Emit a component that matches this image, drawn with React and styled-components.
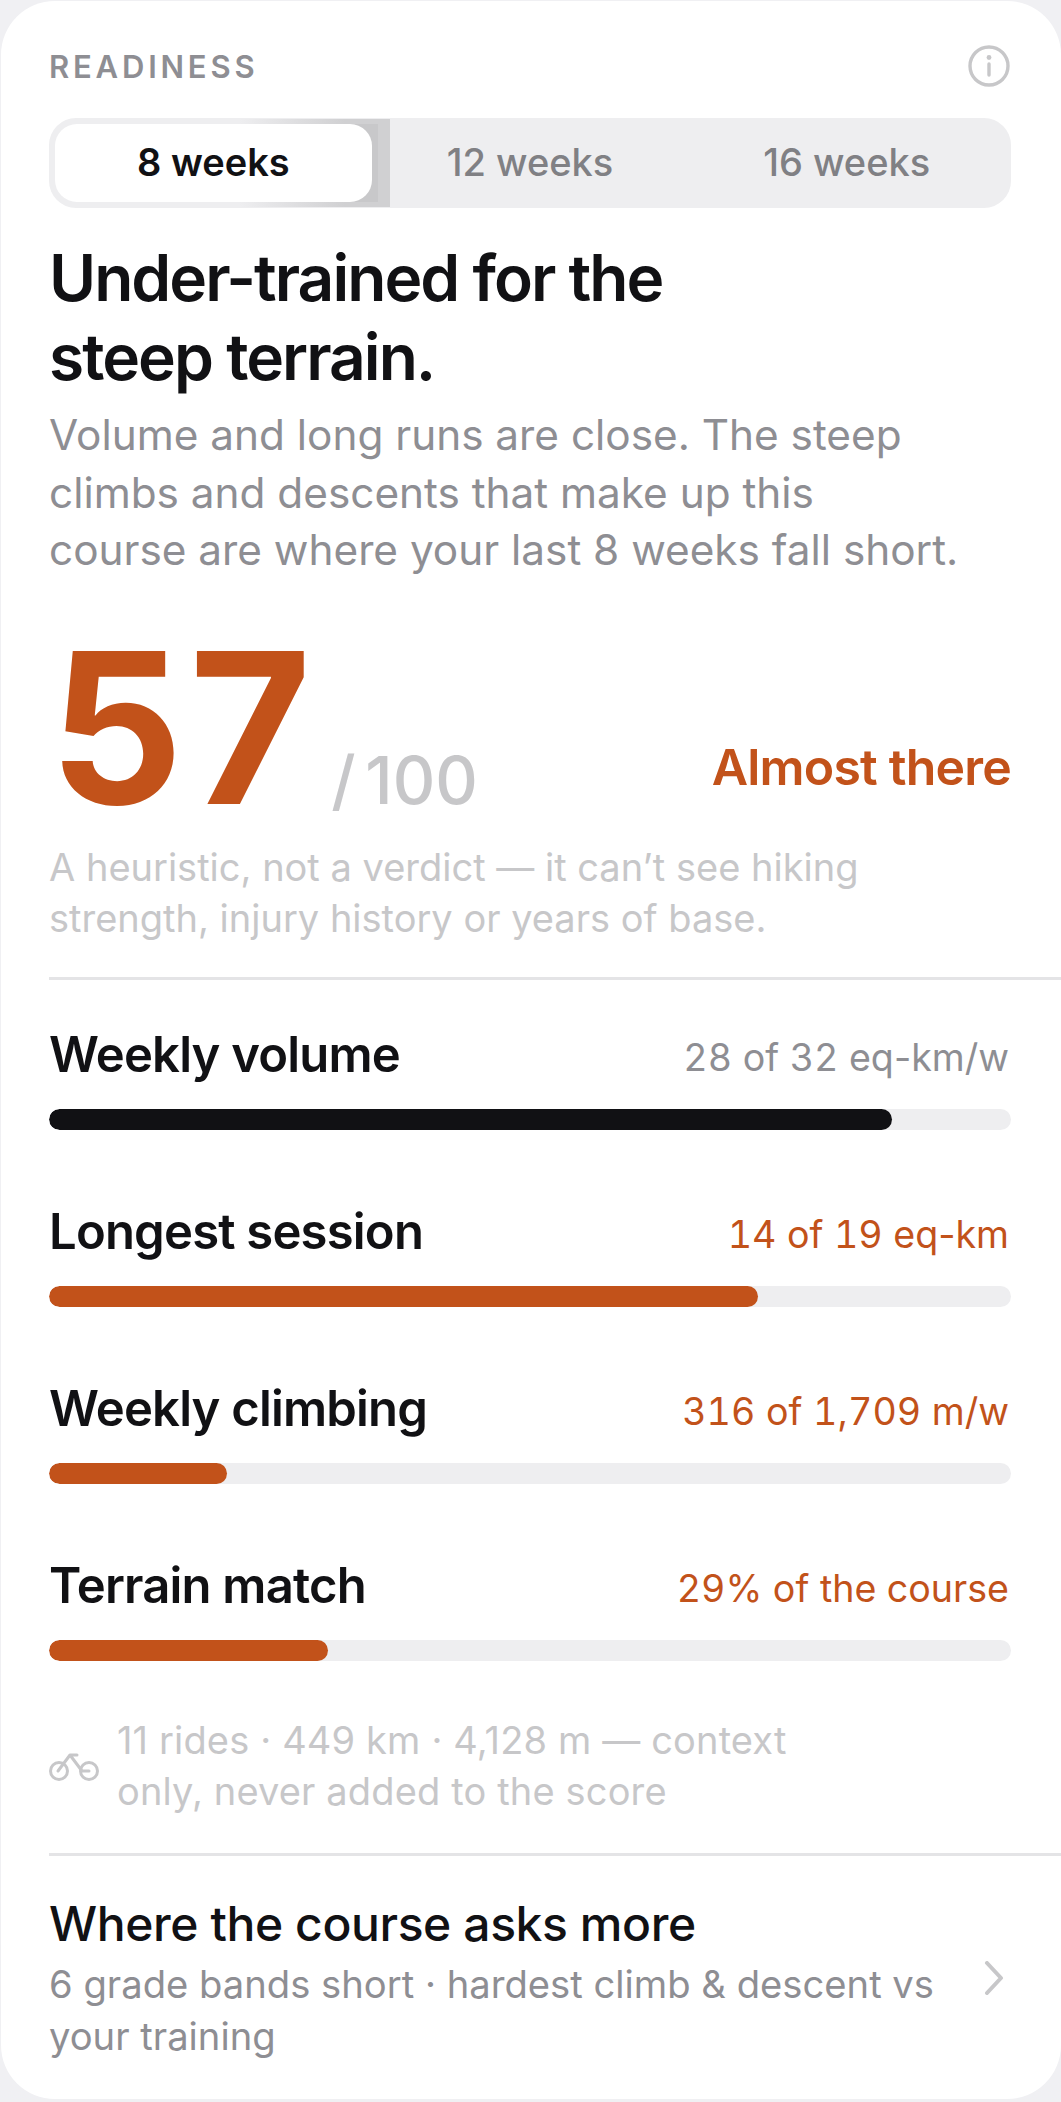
import React from "react";
import styled, { createGlobalStyle } from "styled-components";

const Global = createGlobalStyle`
  html, body {
    margin: 0;
    padding: 0;
    background: #f0f0f3;
  }
  * { box-sizing: border-box; }
`;

const Card = styled.div`
  width: 1061px;
  height: 2102px;
  padding: 1px 0 3px 1px;
  font-family: Inter, "Liberation Sans", sans-serif;
`;

const Inner = styled.div`
  height: 100%;
  background: #ffffff;
  border-radius: 54px;
  padding: 44px 0 0 48px;
  overflow: hidden;
`;

const Header = styled.div`
  display: flex;
  justify-content: space-between;
  align-items: center;
  height: 42px;
  padding-right: 51px;
`;

const Eyebrow = styled.div`
  font-size: 31px;
  font-weight: 600;
  letter-spacing: 3.8px;
  color: #8e8e93;
`;

const Segments = styled.div`
  display: flex;
  isolation: isolate;
  width: 962px;
  height: 90px;
  margin-top: 31px;
  padding: 6px;
  background: #eeeef0;
  border-radius: 27px;
`;

const Segment = styled.div`
  position: relative;
  flex: 1;
  display: flex;
  align-items: center;
  justify-content: center;
  padding-bottom: 3px;
  font-size: 38px;
  font-weight: ${(p) => (p.$active ? 600 : 500)};
  color: ${(p) => (p.$active ? "#111114" : "#808084")};
  background: ${(p) => (p.$active ? "#ffffff" : "transparent")};
  border-radius: 22px;

  ${(p) =>
    p.$active &&
    `
    &::before {
      content: "";
      position: absolute;
      z-index: -1;
      top: 0;
      bottom: 0;
      right: -6px;
      width: 140px;
      background: linear-gradient(90deg, #eeeef0, #c8c8ca 70%);
    }
    &::after {
      content: "";
      position: absolute;
      z-index: -2;
      top: -5px;
      bottom: -5px;
      right: -18px;
      width: 150px;
      background: linear-gradient(90deg, #eeeef0, #d0d0d2 70%);
    }
  `}
`;

const Title = styled.h1`
  margin: 30px 0 0;
  font-size: 64px;
  line-height: 79px;
  font-weight: 600;
  letter-spacing: -1.95px;
  color: #111114;
`;

const Lead = styled.p`
  margin: 10px 0 0;
  font-size: 42.3px;
  line-height: 57.6px;
  color: #8e8e93;
`;

const ScoreRow = styled.div`
  display: flex;
  align-items: flex-end;
  justify-content: space-between;
  padding-right: 50px;
  margin-top: 47px;
  height: 204px;
`;

const ScoreLeft = styled.div`
  display: flex;
  align-items: baseline;
`;

const Score = styled.span`
  font-size: 210px;
  line-height: 204px;
  font-weight: 700;
  letter-spacing: 6px;
  color: #c2521a;
`;

const OutOf = styled.span`
  margin-left: 14px;
  font-size: 66px;
  font-weight: 500;
  word-spacing: -8px;
  color: #c7c7c9;
`;

const Verdict = styled.span`
  padding-bottom: 33px;
  font-size: 50px;
  line-height: 60px;
  font-weight: 600;
  letter-spacing: -0.8px;
  color: #c2521a;
`;

const Note = styled.p`
  margin: 12px 0 0;
  font-size: 38px;
  line-height: 51px;
  color: #c7c7c9;
`;

const Divider = styled.div`
  height: 3px;
  margin-top: ${(p) => p.$gap}px;
  background: #e4e4e6;
`;

const Metrics = styled.div`
  display: flex;
  flex-direction: column;
  gap: 27px;
  width: 962px;
`;

const Metric = styled.div`
  display: flex;
  flex-direction: column;
`;

const MetricHead = styled.div`
  display: flex;
  align-items: center;
  justify-content: space-between;
  height: 108px;
  margin-top: 21px;
  padding-right: 2px;
`;

const MetricLabel = styled.span`
  font-size: 49px;
  font-weight: 600;
  letter-spacing: -0.8px;
  color: #111114;
`;

const MetricValue = styled.span`
  padding-top: 6px;
  font-size: 37.6px;
  color: ${(p) => (p.$low ? "#c2521a" : "#8e8e93")};
`;

const Num = styled.span`
  font-variant-numeric: tabular-nums;
`;

const Track = styled.div`
  height: 21px;
  background: #eeeef0;
  border-radius: 11px;
  overflow: hidden;
`;

const Fill = styled.div`
  height: 100%;
  border-radius: 11px;
  background: ${(p) => (p.$low ? "#c2521a" : "#111114")};
`;

const Context = styled.div`
  display: flex;
  align-items: center;
  gap: 18px;
  width: 962px;
  margin-top: 54px;
  font-size: 38px;
  letter-spacing: 0.15px;
  line-height: 51px;
  color: #c7c7c9;
`;

const CourseLink = styled.div`
  display: flex;
  align-items: center;
  justify-content: space-between;
  width: 962px;
  padding: 38px 7px 0 0;
`;

const CourseTitle = styled.div`
  font-size: 48px;
  line-height: 60px;
  font-weight: 500;
  letter-spacing: -0.4px;
  color: #111114;
`;

const CourseSub = styled.div`
  width: 900px;
  margin-top: 4px;
  font-size: 38.2px;
  line-height: 52px;
  color: #8e8e93;
`;

const metrics = [
  { label: "Weekly volume", value: "28 of 32 eq-km/w", pct: 87.6 },
  { label: "Longest session", value: "14 of 19 eq-km", pct: 73.7, low: true },
  { label: "Weekly climbing", value: "316 of 1,709 m/w", pct: 18.5, low: true },
  { label: "Terrain match", value: "29% of the course", pct: 29, low: true },
];

// digits are fixed width, hyphens and slashes are not
const withNums = (text) =>
  text.split(/(\d+)/).map((part, i) => (i % 2 ? <Num key={i}>{part}</Num> : part));

const InfoIcon = () => (
  <svg width="42" height="42" viewBox="0 0 42 42" fill="none" stroke="#c7c7c9" strokeWidth="3.4">
    <circle cx="21" cy="21" r="19" />
    <path d="M21 19v11" strokeLinecap="round" />
    <circle cx="21" cy="12.5" r="2.4" fill="#c7c7c9" stroke="none" />
  </svg>
);

const BikeIcon = () => (
  <svg width="50" height="30" viewBox="0 0 50 30" fill="none" stroke="#c7c7c9" strokeWidth="3" strokeLinecap="round" strokeLinejoin="round">
    <circle cx="10" cy="20" r="8.5" />
    <circle cx="40" cy="20" r="8.5" />
    <path d="M9 20 21 4h7M21 4l12 16h7" />
  </svg>
);

const Chevron = () => (
  <svg width="20" height="34" viewBox="0 0 20 34" fill="none" stroke="#c7c7c9" strokeWidth="4" strokeLinecap="round" strokeLinejoin="round">
    <path d="M3 2l14 15L3 32" />
  </svg>
);

export default function App() {
  return (
    <Card>
      <Global />
      <Inner>
        <Header>
          <Eyebrow>READINESS</Eyebrow>
          <InfoIcon />
        </Header>
        <Segments>
          <Segment $active>8 weeks</Segment>
          <Segment>12 weeks</Segment>
          <Segment>16 weeks</Segment>
        </Segments>
        <Title>
          Under-trained for the
          <br />
          steep terrain.
        </Title>
        <Lead>
          Volume and long runs are close. The steep
          <br />
          climbs and descents that make up this
          <br />
          course are where your last 8 weeks fall short.
        </Lead>
        <ScoreRow>
          <ScoreLeft>
            <Score>57</Score>
            <OutOf>/ 100</OutOf>
          </ScoreLeft>
          <Verdict>Almost there</Verdict>
        </ScoreRow>
        <Note>
          A heuristic, not a verdict — it can’t see hiking
          <br />
          strength, injury history or years of base.
        </Note>
        <Divider $gap={33} />
        <Metrics>
          {metrics.map((m) => (
            <Metric key={m.label}>
              <MetricHead>
                <MetricLabel>{m.label}</MetricLabel>
                <MetricValue $low={m.low}>{withNums(m.value)}</MetricValue>
              </MetricHead>
              <Track>
                <Fill $low={m.low} style={{ width: `${m.pct}%` }} />
              </Track>
            </Metric>
          ))}
        </Metrics>
        <Context>
          <BikeIcon />
          <div>
            11 rides · 449 km · 4,128 m — context
            <br />
            only, never added to the score
          </div>
        </Context>
        <Divider $gap={36} />
        <CourseLink>
          <div>
            <CourseTitle>Where the course asks more</CourseTitle>
            <CourseSub>
              6 grade bands short · hardest climb &amp; descent vs your training
            </CourseSub>
          </div>
          <Chevron />
        </CourseLink>
      </Inner>
    </Card>
  );
}
